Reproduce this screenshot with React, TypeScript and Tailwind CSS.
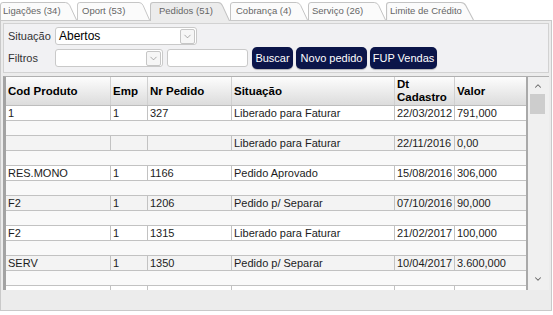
import { ChevronDown, ChevronUp } from 'lucide-react';

const tabs = [
  { label: 'Ligações (34)', w: 'w-[77px]', pl: 'pl-[3px]' },
  { label: 'Oport (53)', w: 'w-[73px]', pl: 'pl-[5px]' },
  { label: 'Pedidos (51)', w: 'w-[80px]', pl: 'pl-[9px]', active: true },
  { label: 'Cobrança (4)', w: 'w-[78px]', pl: 'pl-[6px]' },
  { label: 'Serviço (26)', w: 'w-[78px]', pl: 'pl-[4px]' },
  { label: 'Limite de Crédito', w: 'w-[88px]', pl: 'pl-[4px]' },
];

const rows = [
  { cod: '1', emp: '1', nr: '327', sit: 'Liberado para Faturar', dt: '22/03/2012', valor: '791,000' },
  { cod: '', emp: '', nr: '', sit: 'Liberado para Faturar', dt: '22/11/2016', valor: '0,00' },
  { cod: 'RES.MONO', emp: '1', nr: '1166', sit: 'Pedido Aprovado', dt: '15/08/2016', valor: '306,000' },
  { cod: 'F2', emp: '1', nr: '1206', sit: 'Pedido p/ Separar', dt: '07/10/2016', valor: '90,000' },
  { cod: 'F2', emp: '1', nr: '1315', sit: 'Liberado para Faturar', dt: '21/02/2017', valor: '100,000' },
  { cod: 'SERV', emp: '1', nr: '1350', sit: 'Pedido p/ Separar', dt: '10/04/2017', valor: '3.600,000' },
  { cod: '', emp: '', nr: '', sit: '', dt: '', valor: '' },
];

const cols = 'grid grid-cols-[105px_37px_84px_163px_60px_71px]';

function Tab({ label, w, pl, active }: { label: string; w: string; pl: string; active?: boolean }) {
  return (
    <div className={`relative h-[18px] ${w} ${active ? 'z-10 -mb-px h-[19px]' : ''}`}>
      <svg className="absolute inset-0 h-full w-full" preserveAspectRatio="none" viewBox="0 0 80 18">
        <path
          d="M0.5,18 L0.5,3 Q0.5,0.5 3,0.5 L68,0.5 Q71,0.5 72.5,3.5 L79.5,18"
          fill={active ? '#ececec' : '#fbfbfb'}
          stroke="#c3c3c3"
          strokeWidth="1"
        />
      </svg>
      <span className={`relative block whitespace-nowrap pt-[3px] text-[9.5px] leading-[12px] text-[#666] ${pl}`}>
        {label}
      </span>
    </div>
  );
}

function Select({ w, value }: { w: string; value?: string }) {
  return (
    <div className={`flex h-[18px] ${w} items-center justify-between rounded-[3px] border border-[#c9c9c9] bg-white pl-[3px] pr-[1px]`}>
      <span className="text-[12px] leading-[14px] text-black">{value}</span>
      <div className="flex h-[15px] w-[15px] items-center justify-center rounded-[2px] border border-[#c6c6c6] bg-[#f6f6f6]">
        <ChevronDown size={11} strokeWidth={1.3} color="#777" />
      </div>
    </div>
  );
}

function Btn({ label, w }: { label: string; w: string }) {
  return (
    <div className={`flex h-[22px] ${w} items-center justify-center rounded-[5px] bg-[#0b1549] text-[11px] text-white shadow-[0_1px_1px_rgba(0,0,0,0.25)]`}>
      {label}
    </div>
  );
}

export default function App() {
  return (
    <div className="h-[315px] w-[553px] bg-white font-['Liberation_Sans',Arial,sans-serif]">
      <div className="flex h-[20px] items-end">
        {tabs.map(t => (
          <Tab key={t.label} {...t} />
        ))}
      </div>

      <div className="h-[291px] w-[552px] border border-[#c9c9c9] bg-[#ececec] p-[2px]">
        {/* filtros */}
        <div className="h-[50px] border border-[#d2d2d2] bg-[#f1f1f3] pl-[4px] pt-[3px]">
          <div className="flex h-[18px] items-center">
            <span className="w-[47px] text-[11px] text-[#333]">Situação</span>
            <Select w="w-[142px]" value="Abertos" />
          </div>
          <div className="mt-[2px] flex h-[22px] items-center">
            <span className="w-[47px] text-[11px] text-[#333]">Filtros</span>
            <Select w="w-[108px]" />
            <div className="ml-[4px] h-[18px] w-[81px] rounded-[3px] border border-[#c9c9c9] bg-white" />
            <div className="ml-[4px] flex gap-[3px]">
              <Btn label="Buscar" w="w-[41px]" />
              <Btn label="Novo pedido" w="w-[71px]" />
              <Btn label="FUP Vendas" w="w-[67px]" />
            </div>
          </div>
        </div>

        {/* grid */}
        <div className="mt-[3px] flex h-[214px] overflow-hidden border-l-[3px] border-t border-l-[#a3a3a3] border-t-[#b0b0b0] bg-white">
          <div className="w-[520px] text-[11px] text-[#1c1c1c]">
            <div className={`${cols} h-[29px] border-b border-[#bdbdbd] bg-gradient-to-b from-[#fdfdfd] to-[#dcdcdc] text-[11.5px] font-bold text-black`}>
              {['Cod Produto', 'Emp', 'Nr Pedido', 'Situação', 'Dt Cadastro', 'Valor'].map((h, i) => (
                <div key={h} className={`flex items-center pl-[2px] leading-[13px] ${i < 5 ? 'border-r border-[#d0d0d0]' : ''}`}>
                  {h === 'Dt Cadastro' ? (
                    <span>Dt<br />Cadastro</span>
                  ) : (
                    h
                  )}
                </div>
              ))}
            </div>
            {rows.map((r, i) => (
              <div key={i}>
                <div className={`${cols} h-[15px] border-b border-[#c2c2c2] ${i % 2 ? 'bg-[#f3f3f3]' : 'bg-white'}`}>
                  {[r.cod, r.emp, r.nr, r.sit, r.dt, r.valor].map((v, j) => (
                    <div key={j} className={`pl-[2px] leading-[14px] ${j < 5 ? 'border-r border-[#c2c2c2]' : ''}`}>
                      {v}
                    </div>
                  ))}
                </div>
                <div className="h-[15px] border-b border-[#c2c2c2] bg-[#f9f9f9]" />
              </div>
            ))}
          </div>
          <div className="w-[2px] bg-[#a9a9a9]" />
          {/* scrollbar */}
          <div className="relative w-[21px] bg-[#f0f0f0]">
            <ChevronUp className="absolute left-[5px] top-[4px]" size={10} strokeWidth={2.5} color="#666" />
            <div className="absolute left-[2px] top-[17px] h-[20px] w-[15px] bg-[#cdcdcd]" />
            <ChevronDown className="absolute bottom-[6px] left-[5px]" size={10} strokeWidth={2.5} color="#666" />
          </div>
        </div>
      </div>
    </div>
  );
}
